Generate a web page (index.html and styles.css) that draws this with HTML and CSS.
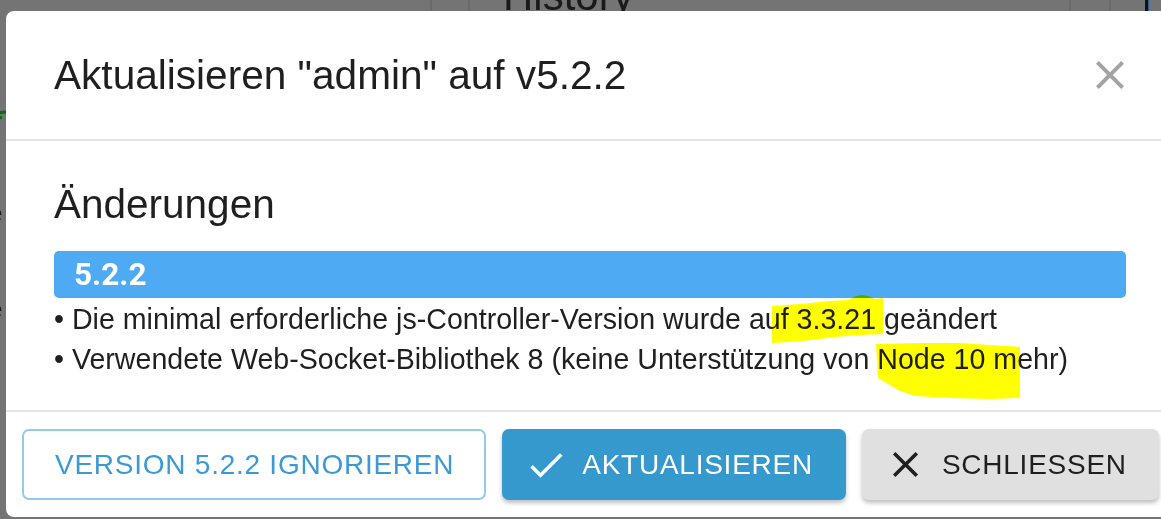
FILE: index.html
```html
<!DOCTYPE html>
<html lang="de">
<head>
  <meta charset="UTF-8">
  <meta name="viewport" content="width=device-width, initial-scale=1.0">
  <title>Aktualisieren</title>
  <link rel="stylesheet" href="styles.css">
</head>
<body>
  <!-- Seite hinter dem Dialog (abgedunkelt) -->
  <div class="backdrop">
    <span class="bg-title">History</span>
    <span class="bg-line bg-line-1"></span>
    <span class="bg-line bg-line-2"></span>
    <span class="bg-line bg-line-3"></span>
    <span class="bg-line bg-line-4"></span>
    <span class="bg-dark"></span>
    <svg class="bg-arc" width="8" height="50" viewBox="0 0 8 50">
      <path d="M-14 44 A 20 20 0 0 1 6 24" fill="none" stroke="#0b6a0b" stroke-width="3"/>
      <path d="M-14 36 A 14 14 0 0 1 2 30" fill="none" stroke="#0b6a0b" stroke-width="3"/>
    </svg>
    <span class="bg-letter bg-letter-1">e</span>
    <span class="bg-letter bg-letter-2">r</span>
    <span class="bg-letter bg-letter-3">e</span>
  </div>

  <div class="dialog">
    <div class="dialog-header">
      <h1>Aktualisieren "admin" auf v5.2.2</h1>
      <button class="close-btn" aria-label="Schließen">
        <svg width="48" height="48" viewBox="0 0 24 24">
          <path d="M19 6.41 17.59 5 12 10.59 6.41 5 5 6.41 10.59 12 5 17.59 6.41 19 12 13.41 17.59 19 19 17.59 13.41 12z" fill="#a3a3a3"/>
        </svg>
      </button>
    </div>

    <div class="dialog-content">
      <h2>Änderungen</h2>
      <div class="version-bar">5.2.2</div>
      <ul class="changes">
        <li>• Die minimal erforderliche js-Controller-Version wurde auf 3.3.21 geändert</li>
        <li>• Verwendete Web-Socket-Bibliothek 8 (keine Unterstützung von Node 10 mehr)</li>
      </ul>
    </div>

    <div class="dialog-actions">
      <button class="btn btn-outlined">Version 5.2.2 ignorieren</button>
      <button class="btn btn-primary">
        <svg width="44" height="44" viewBox="0 0 24 24">
          <path d="M9 16.17 4.83 12l-1.42 1.41L9 19 21 7l-1.41-1.41z" fill="#fff"/>
        </svg>
        Aktualisieren
      </button>
      <button class="btn btn-grey">
        <svg width="43" height="43" viewBox="0 0 24 24">
          <path d="M19 6.41 17.59 5 12 10.59 6.41 5 5 6.41 10.59 12 5 17.59 6.41 19 12 13.41 17.59 19 19 17.59 13.41 12z" fill="#1f1f1f"/>
        </svg>
        Schliessen
      </button>
    </div>
  </div>

  <!-- Textmarker-Anmerkungen -->
  <svg class="marker" width="1161" height="519" viewBox="0 0 1161 519">
    <path d="M772 306 L800 304 L830 301 L848 300 L856 296 L862 295 L868 296 L875 299 L883 298 L883 334 L860 335 L835 337 L812 340 L790 342 L772 343 Z" fill="#ffff00"/>
    <path d="M876 344 L920 343 L960 343 L990 345 L1020 347 L1020 398 L990 399 L950 398 L915 396 L900 391 L888 384 L878 378 Z" fill="#ffff00"/>
  </svg>
</body>
</html>
```

FILE: styles.css
```css
* {
  margin: 0;
  padding: 0;
  box-sizing: border-box;
}

body {
  position: relative;
  width: 1161px;
  height: 519px;
  overflow: hidden;
  background-color: #747474;
  font-family: 'Liberation Sans', Arial, sans-serif;
  color: #1f1f1f;
  padding: 11px 0 0 6px;
}

/* Hintergrundseite */
.backdrop {
  position: absolute;
  inset: 0;
}

.bg-title {
  position: absolute;
  left: 503px;
  top: -28px;
  font-size: 42px;
  color: #1a1a1a;
}

.bg-line {
  position: absolute;
  top: 0;
  width: 2px;
  height: 11px;
  background-color: #6a6a6a;
}

.bg-line-1 { left: 430px; }
.bg-line-2 { left: 468px; }
.bg-line-3 { left: 1069px; }
.bg-line-4 { left: 1109px; }

.bg-dark {
  position: absolute;
  left: 1145px;
  top: 0;
  width: 4px;
  height: 11px;
  background-color: #111;
  border-right: 1px solid #2a5aa0;
}

.bg-arc {
  position: absolute;
  left: 0;
  top: 88px;
}

.bg-letter {
  position: absolute;
  left: -12px;
  font-size: 26px;
  color: #1a1a1a;
}

.bg-letter-1 { top: 198px; }
.bg-letter-2 { top: 240px; color: #3a2a10; }
.bg-letter-3 { top: 294px; }

/* Dialog */
.dialog {
  position: relative;
  width: 1168px;
  height: 506px;
  background-color: #fff;
  border-radius: 8px;
  display: flex;
  flex-direction: column;
}

.dialog-header {
  height: 130px;
  display: flex;
  align-items: center;
  justify-content: space-between;
  padding: 0 48px;
  border-bottom: 2px solid #e3e3e3;
}

.dialog-header h1 {
  font-size: 40.6px;
  font-weight: 400;
  color: #1f1f1f;
}

.close-btn {
  background: none;
  border: none;
  display: flex;
  margin-right: -8px;
}

.dialog-content {
  flex: 1;
  padding: 40px 48px 0;
  border-bottom: 2px solid #e3e3e3;
}

.dialog-content h2 {
  font-size: 40.5px;
  font-weight: 400;
  line-height: 46px;
  margin-bottom: 24px;
}

.version-bar {
  height: 47px;
  background-color: #4eaaf3;
  border-radius: 5px;
  color: #fff;
  font-family: Roboto, sans-serif;
  font-weight: 700;
  font-size: 31.5px;
  line-height: 47px;
  padding-left: 20px;
}

.changes {
  list-style: none;
  font-size: 28.6px;
  line-height: 40px;
  margin-top: 1px;
}

/* Buttons */
.dialog-actions {
  height: 105px;
  display: flex;
  align-items: center;
  gap: 16px;
  padding: 0 16px;
}

.btn {
  flex-shrink: 0;
  height: 71px;
  display: flex;
  align-items: center;
  border-radius: 7px;
  font-family: 'Liberation Sans', Arial, sans-serif;
  font-size: 28px;
  text-transform: uppercase;
  letter-spacing: 0.75px;
  white-space: nowrap;
  cursor: pointer;
}

.btn-outlined {
  background-color: #fff;
  color: #3a9ad6;
  border: 2px solid #93cbe6;
  padding: 0 30px 0 31px;
}

.btn-primary {
  gap: 14px;
  background-color: #3699cd;
  color: #fff;
  border: none;
  padding: 0 33px 0 22px;
  box-shadow: 0 3px 4px rgba(0, 0, 0, 0.25);
}

.btn-grey {
  gap: 15px;
  background-color: #e0e0e0;
  color: #1f1f1f;
  border: none;
  padding: 0 32px 0 22px;
  box-shadow: 0 3px 4px rgba(0, 0, 0, 0.25);
}

/* Textmarker */
.marker {
  position: absolute;
  left: 0;
  top: 0;
  pointer-events: none;
  mix-blend-mode: multiply;
}
```
